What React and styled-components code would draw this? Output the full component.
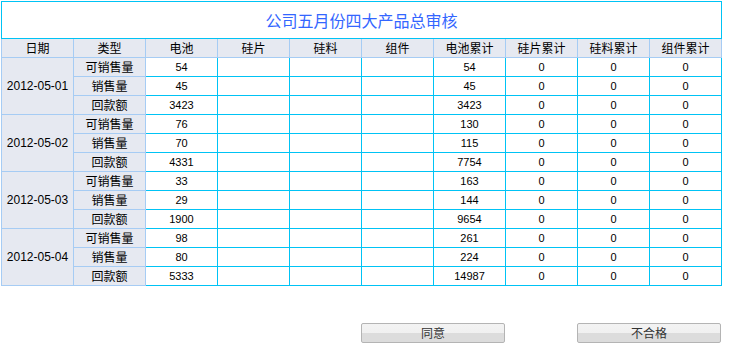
import React from "react";
import styled, { createGlobalStyle } from "styled-components";

const Global = createGlobalStyle`
  html, body { margin: 0; padding: 0; background: #fff; }
  body { font-family: "Liberation Sans", "Noto Sans CJK SC", sans-serif; font-size: 12px; color: #000; }
`;

const CYAN = "#00c3f5";
const LIGHT = "#a6ccf4";
const GRAY = "#e6e9f1";

const Page = styled.div`
  padding: 1px 0 0 1px;
  width: 721px;
`;

const Table = styled.table`
  border-collapse: separate;
  border-spacing: 0;
  table-layout: fixed;
  width: 721px;
`;

const Col = styled.col`
  width: ${(p) => (p.$first ? "73px" : "72px")};
`;

const TitleCell = styled.td`
  border: 1px solid ${CYAN};
  height: 36px;
  padding: 0;
  text-align: center;
  color: #3366ff;
  font-size: 16px;
  font-family: "Noto Sans CJK SC", sans-serif;
`;

const Th = styled.th`
  border-right: 1px solid ${LIGHT};
  border-bottom: 1px solid ${LIGHT};
  border-left: ${(p) => (p.$first ? `1px solid ${LIGHT}` : "none")};
  background: ${GRAY};
  height: 18px;
  padding: 0;
  font-weight: normal;
  font-size: 12px;
  line-height: 18px;
  font-family: "Noto Sans CJK SC", sans-serif;
`;

const LabelCell = styled.td`
  border-right: 1px solid ${LIGHT};
  border-bottom: 1px solid ${LIGHT};
  border-left: ${(p) => (p.$first ? `1px solid ${LIGHT}` : "none")};
  background: ${GRAY};
  height: 18px;
  padding: 0;
  text-align: center;
  line-height: 18px;
  font-size: 12px;
  font-family: ${(p) =>
    p.$cjk ? `"Noto Sans CJK SC", sans-serif` : `"Liberation Sans", sans-serif`};
`;

const DataCell = styled.td`
  border-right: 1px solid ${CYAN};
  border-bottom: 1px solid ${CYAN};
  height: 18px;
  padding: 0;
  text-align: center;
  line-height: 18px;
  font-size: 11px;
  font-family: "Liberation Sans", sans-serif;
`;

const ButtonRow = styled.div`
  display: grid;
  grid-template-columns: repeat(10, 72px);
  margin-top: 37px;
`;

const Button = styled.button`
  grid-column: ${(p) => p.$col} / span 2;
  height: 20px;
  padding: 0;
  border: 1px solid #b4b4b4;
  border-radius: 2px;
  background: linear-gradient(#f3f3f3 0%, #f0f0f0 50%, #dcdcdc 50%, #dcdcdc 100%);
  color: #333;
  font-size: 12px;
  font-family: "Noto Sans CJK SC", sans-serif;
  line-height: 18px;
  cursor: pointer;
`;

const headers = ["日期", "类型", "电池", "硅片", "硅料", "组件", "电池累计", "硅片累计", "硅料累计", "组件累计"];

const data = [
  { date: "2012-05-01", rows: [["可销售量", 54, 54], ["销售量", 45, 45], ["回款额", 3423, 3423]] },
  { date: "2012-05-02", rows: [["可销售量", 76, 130], ["销售量", 70, 115], ["回款额", 4331, 7754]] },
  { date: "2012-05-03", rows: [["可销售量", 33, 163], ["销售量", 29, 144], ["回款额", 1900, 9654]] },
  { date: "2012-05-04", rows: [["可销售量", 98, 261], ["销售量", 80, 224], ["回款额", 5333, 14987]] },
];

export default function App() {
  return (
    <Page>
      <Global />
      <Table>
        <colgroup>
          {headers.map((h, i) => (
            <Col key={h} $first={i === 0} />
          ))}
        </colgroup>
        <tbody>
          <tr>
            <TitleCell colSpan={10}>公司五月份四大产品总审核</TitleCell>
          </tr>
          <tr>
            {headers.map((h, i) => (
              <Th key={h} $first={i === 0}>{h}</Th>
            ))}
          </tr>
          {data.map((g) =>
            g.rows.map((r, i) => (
              <tr key={g.date + i}>
                {i === 0 && (
                  <LabelCell rowSpan={3} $first>
                    {g.date}
                  </LabelCell>
                )}
                <LabelCell $cjk>{r[0]}</LabelCell>
                <DataCell>{r[1]}</DataCell>
                <DataCell />
                <DataCell />
                <DataCell />
                <DataCell>{r[2]}</DataCell>
                <DataCell>0</DataCell>
                <DataCell>0</DataCell>
                <DataCell>0</DataCell>
              </tr>
            ))
          )}
        </tbody>
      </Table>
      <ButtonRow>
        <Button $col={6}>同意</Button>
        <Button $col={9}>不合格</Button>
      </ButtonRow>
    </Page>
  );
}
